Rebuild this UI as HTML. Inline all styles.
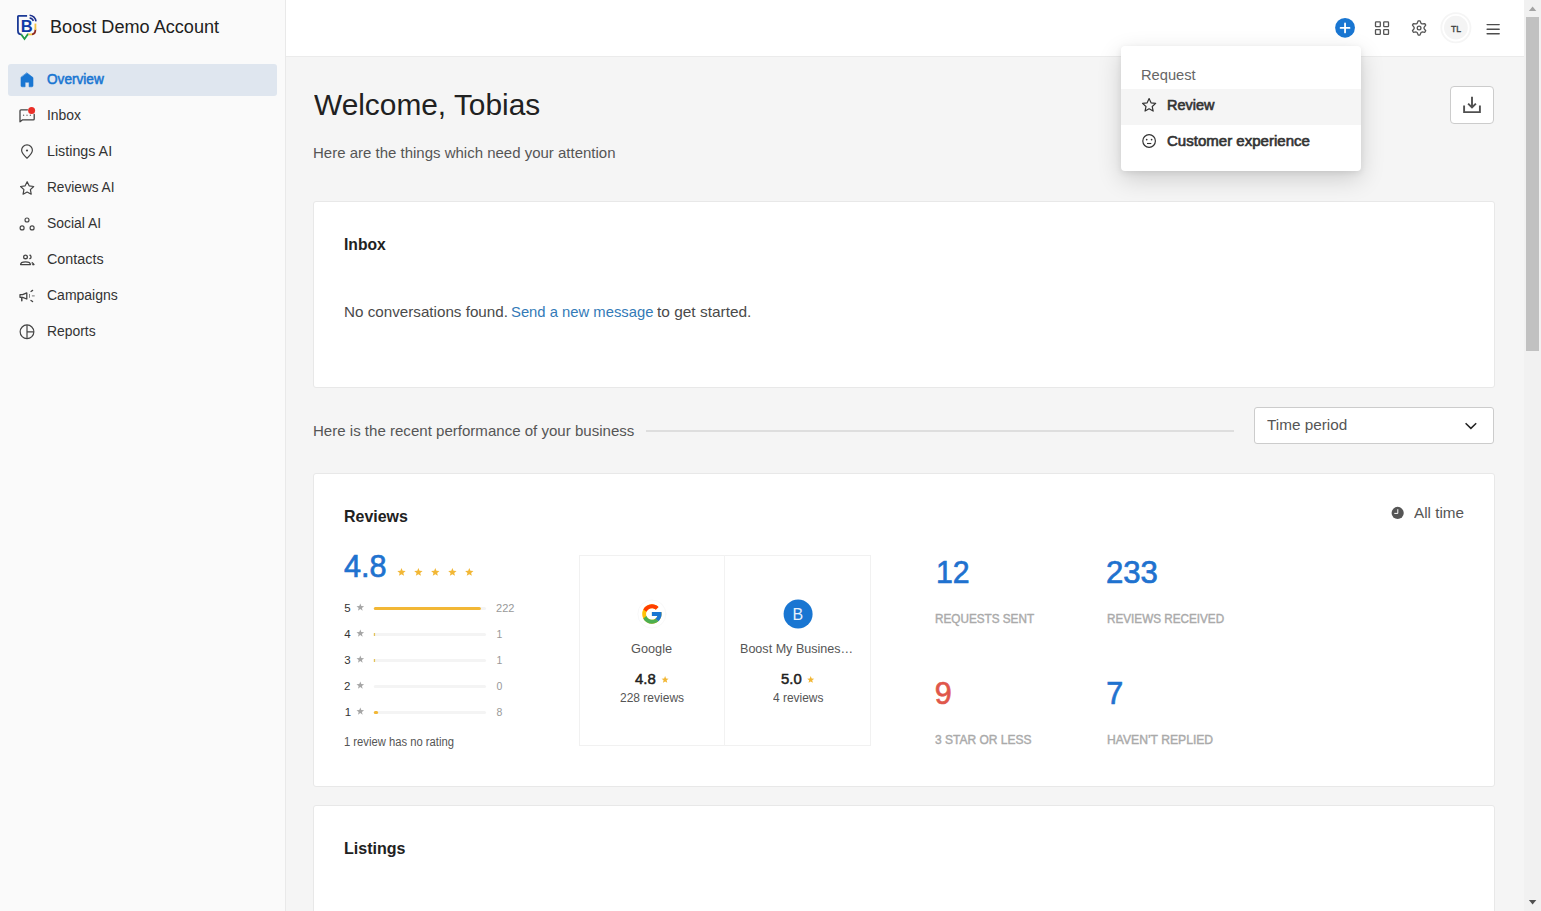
<!DOCTYPE html>
<html lang="en">
<head>
<meta charset="utf-8">
<title>Boost Demo Account - Overview</title>
<style>
*{box-sizing:border-box;margin:0;padding:0}
html,body{width:1541px;height:911px;overflow:hidden;background:#f5f5f5;font-family:"Liberation Sans",sans-serif;color:#212121}
ul,li{list-style:none}
.t{position:absolute;white-space:nowrap;line-height:1;font-weight:400;text-decoration:none;font-style:normal}
.box{position:absolute}
svg.ic{position:absolute;left:0;top:0;overflow:visible;pointer-events:none}
#sidebar-bg{position:absolute;left:0;top:0;width:286px;height:911px;background:#fafafa;border-right:1px solid #e9e9e9}
#topbar-bg{position:absolute;left:286px;top:0;width:1238px;height:57px;background:#fff;border-bottom:1px solid #ebebeb}
#scroll-track{position:absolute;left:1524px;top:0;width:17px;height:911px;background:#f1f1f1}
#scroll-thumb{position:absolute;left:1526px;top:17px;width:13px;height:334px;background:#c1c1c1}
.nav-active{position:absolute;left:8px;top:64px;width:269px;height:32px;border-radius:3px;background:#dfe6ef}
.card{position:absolute;left:313px;width:1182px;background:#fff;border:1px solid #e8e8e8;border-radius:3px}
.btn{position:absolute;background:#fff;border:1px solid #ccc;border-radius:4px}
.menu{position:absolute;left:1121px;top:46px;width:240px;height:125px;background:#fff;border-radius:4px;box-shadow:0 8px 24px rgba(0,0,0,.16),0 2px 6px rgba(0,0,0,.08)}
.menu-hover{position:absolute;left:1121px;top:89px;width:240px;height:36px;background:#f5f5f5}
</style>
</head>
<body>

<aside id="sidebar" aria-label="Main navigation">
<div id="sidebar-bg"></div>
<div class="nav-active"></div>
<svg class="ic" width="1541" height="911" viewBox="0 0 1541 911" fill="none" stroke-linecap="round" stroke-linejoin="round" aria-hidden="true">
<g stroke-width="1.8" stroke-linecap="butt">
<path d="M27.1 15.9H18.6Q17.9 15.9 17.9 16.6V30.4Q17.9 34.4 21.6 34.4" stroke="#1b3a96"/>
<path d="M21.3 34.4L24.5 38.9L27.7 34.4H28.6" stroke="#1e9a46" stroke-linejoin="miter"/>
<path d="M28.4 34.4H32.2" stroke="#f3c440"/>
<path d="M32 34.4Q35.4 34.2 35.4 29.6" stroke="#8e2a22"/>
<path d="M35.4 30V23.6" stroke="#f2c445"/>
<path d="M29.6 15.2A7.4 7.4 0 0 1 36 21.4" stroke="#1b2f8c" stroke-width="1.6"/>
<path d="M29.6 18A4.6 4.6 0 0 1 33.4 20.9" stroke="#1b2f8c" stroke-width="1.6"/>
</g>
<path d="M27 73L33 77.6V85.7Q33 86.8 31.9 86.8H29.1V82.6Q29.1 82.2 28.7 82.2H25.5Q25.1 82.2 25.1 82.6V86.8H22.1Q21 86.8 21 85.7V77.6Z" fill="#1976d2" stroke="#1976d2" stroke-width="0.6"/>
<path d="M27.4 109.8H21Q20 109.8 20 110.8V121.8L22.3 119.9H33.2Q34.2 119.9 34.2 118.9V114.3" stroke="#444" stroke-width="1.3"/>
<g fill="#666"><circle cx="23.6" cy="115.2" r="0.7"/><circle cx="27" cy="115.2" r="0.7"/><circle cx="30.4" cy="115.2" r="0.7"/></g>
<circle cx="31.6" cy="110.6" r="3.5" fill="#ea2f28"/>
<path d="M27 158.2C23.4 154.9 21.6 152.4 21.6 150.3A5.4 5.4 0 0 1 32.4 150.3C32.4 152.4 30.6 154.9 27 158.2Z" stroke="#444" stroke-width="1.2"/>
<circle cx="27" cy="150.5" r="1.1" fill="#444"/>
<path d="M27.15 181.70L29.15 185.85L33.71 186.47L30.38 189.65L31.21 194.18L27.15 192.00L23.09 194.18L23.92 189.65L20.59 186.47L25.15 185.85Z" stroke="#444" stroke-width="1.2" stroke-linejoin="round"/>
<g stroke="#444" stroke-width="1.15"><circle cx="27" cy="220" r="2"/><circle cx="22.1" cy="227.9" r="2"/><circle cx="32.1" cy="227.9" r="2"/></g>
<g stroke="#444" stroke-width="1.3">
<circle cx="25.5" cy="256.9" r="1.85"/>
<path d="M29.9 255.2A1.9 1.9 0 0 1 29.9 258.7"/>
<path d="M20.6 264.6C20.6 263.2 22.6 261.9 25.5 261.9C28.4 261.9 30.4 263.2 30.4 264.6Z"/>
<path d="M32.3 262.5C33.6 263.1 34.2 263.9 34.2 264.9H32.9Z" fill="#444" stroke-width="0.8"/>
</g>
<g stroke="#444" stroke-width="1.3">
<path d="M20 294.7H22.6L26.8 292.9V299L22.6 297.3H20Z"/>
<path d="M21.8 297.6V300.8" stroke-width="1.5"/>
<path d="M29.5 294.4V297.4" stroke-width="0.9" stroke="#777"/>
<path d="M32.3 295.9H34.3" stroke-width="1" stroke="#777"/>
<path d="M31 291.5L32.6 290.4"/>
<path d="M31 300.4L32.6 301.6"/>
</g>
<g stroke="#444" stroke-width="1.2"><circle cx="27" cy="331.8" r="6.85"/><path d="M27 325V338.6M27 331.9H33.8" stroke-linecap="butt"/></g>
</svg>
<span class="t" style="left:20.87px;top:18px;font-size:16.5px;color:#0f3aa8;font-weight:700;">B</span>
<span class="t" style="left:50.29px;top:18px;font-size:18px;color:#212121;transform:scaleX(1.0057);transform-origin:0 0;">Boost Demo Account</span>
<a class="t" style="left:47.06px;top:72px;font-size:14px;color:#1976d2;transform:scaleX(0.9730);transform-origin:0 0;-webkit-text-stroke:0.55px #1976d2;">Overview</a>
<a class="t" style="left:46.91px;top:108px;font-size:14px;color:#333;transform:scaleX(0.9953);transform-origin:0 0;">Inbox</a>
<a class="t" style="left:46.88px;top:144px;font-size:14px;color:#333;transform:scaleX(1.0204);transform-origin:0 0;">Listings AI</a>
<a class="t" style="left:46.88px;top:180px;font-size:14px;color:#333;transform:scaleX(0.9747);transform-origin:0 0;">Reviews AI</a>
<a class="t" style="left:46.97px;top:216px;font-size:14px;color:#333;transform:scaleX(0.9935);transform-origin:0 0;">Social AI</a>
<a class="t" style="left:46.83px;top:252px;font-size:14px;color:#333;transform:scaleX(1.0248);transform-origin:0 0;">Contacts</a>
<a class="t" style="left:46.84px;top:288px;font-size:14px;color:#333;transform:scaleX(0.9997);transform-origin:0 0;">Campaigns</a>
<a class="t" style="left:46.86px;top:324px;font-size:14px;color:#333;transform:scaleX(0.9929);transform-origin:0 0;">Reports</a>
</aside>
<header id="topbar">
<div id="topbar-bg"></div>
<svg class="ic" width="1541" height="911" viewBox="0 0 1541 911" fill="none" stroke-linecap="round" stroke-linejoin="round" aria-hidden="true">
<circle cx="1345.05" cy="27.85" r="9.9" fill="#1976d2"/>
<path d="M1340.6 27.9H1349.5M1345.05 23.4V32.4" stroke="#fff" stroke-width="1.8"/>
<g stroke="#555" stroke-width="1.3"><rect x="1375.5" y="21.8" width="4.8" height="4.8" rx="0.6"/><rect x="1375.5" y="29.6" width="4.8" height="4.8" rx="0.6"/><rect x="1383.7" y="21.8" width="4.8" height="4.8" rx="0.6"/><rect x="1383.7" y="29.6" width="4.8" height="4.8" rx="0.6"/></g>
<path d="M1417.15 23.35L1418.22 20.80L1419.98 20.80L1421.05 23.35L1422.11 23.96L1424.85 23.62L1425.73 25.14L1424.06 27.34L1424.06 28.56L1425.73 30.76L1424.85 32.28L1422.11 31.94L1421.05 32.55L1419.98 35.10L1418.22 35.10L1417.15 32.55L1416.09 31.94L1413.35 32.28L1412.47 30.76L1414.14 28.56L1414.14 27.34L1412.47 25.14L1413.35 23.62L1416.09 23.96Z" stroke="#555" stroke-width="1.3"/>
<circle cx="1419.1" cy="27.95" r="1.85" stroke="#555" stroke-width="1.3"/>
<circle cx="1455.9" cy="27.7" r="14.6" stroke="#f5f5f5" stroke-width="1.8"/>
<circle cx="1455.9" cy="27.7" r="11.9" fill="#f4f4f4"/>
<path d="M1487.1 24.6H1499.2M1487.1 29.2H1499.2M1487.1 33.7H1499.2" stroke="#4d4d4d" stroke-width="1.4"/>
</svg>
<span class="t" style="left:1451.12px;top:24px;font-size:9.5px;color:#444;transform:scaleX(0.9148);transform-origin:0 0;-webkit-text-stroke:0.4px #444;">TL</span>
</header>
<main id="content">
<section id="welcome">
<button class="btn" type="button" aria-label="Download" style="left:1450px;top:86px;width:44px;height:38px"></button>
<svg class="ic" width="1541" height="911" viewBox="0 0 1541 911" fill="none" stroke-linecap="round" stroke-linejoin="round" aria-hidden="true">
<path d="M1464.1 105.6V112.1H1479.9V105.6M1472 96.7V107.3M1468.1 103.6L1472 107.5L1475.9 103.6" stroke="#505050" stroke-width="1.9" stroke-linecap="butt" stroke-linejoin="miter"/>
</svg>
<h1 class="t" style="left:314.3px;top:90px;font-size:30px;color:#212121;transform:scaleX(0.9950);transform-origin:0 0;">Welcome, Tobias</h1>
<p class="t" style="left:313.43px;top:145px;font-size:15px;color:#555;transform:scaleX(0.9994);transform-origin:0 0;">Here are the things which need your attention</p>
</section>
<section id="inbox-card">
<div class="card" style="top:201px;height:187px"></div>
<h2 class="t" style="left:344.02px;top:236px;font-size:16.5px;color:#212121;transform:scaleX(0.9496);transform-origin:0 0;font-weight:700;">Inbox</h2>
<span class="t" style="left:343.61px;top:304px;font-size:15px;color:#4a4a4a;transform:scaleX(1.0136);transform-origin:0 0;">No conversations found.</span>
<a class="t" style="left:510.74px;top:304px;font-size:15px;color:#337ab7;transform:scaleX(0.9876);transform-origin:0 0;">Send a new message</a>
<span class="t" style="left:656.5px;top:304px;font-size:15px;color:#4a4a4a;transform:scaleX(1.0291);transform-origin:0 0;">to get started.</span>
</section>
<section id="performance">
<div class="box" style="left:646px;top:430px;width:588px;height:2px;background:#dedede"></div>
<div class="btn" role="combobox" style="left:1254px;top:407px;width:240px;height:37px;border-radius:3px"></div>
<svg class="ic" width="1541" height="911" viewBox="0 0 1541 911" fill="none" stroke-linecap="round" stroke-linejoin="round" aria-hidden="true">
<path d="M1465.6 423.2L1470.9 428.4L1476.2 423.2" stroke="#222" stroke-width="1.5" stroke-linecap="butt" stroke-linejoin="miter"/>
</svg>
<p class="t" style="left:313.22px;top:423px;font-size:15px;color:#555;transform:scaleX(1.0037);transform-origin:0 0;">Here is the recent performance of your business</p>
<span class="t" style="left:1266.86px;top:417px;font-size:15px;color:#555;transform:scaleX(1.0198);transform-origin:0 0;">Time period</span>
</section>
<section id="reviews-card">
<div class="card" style="top:473px;height:314px"></div>
<div class="box" style="left:579px;top:555px;width:292px;height:191px;border:1px solid #f1f1f1"></div>
<div class="box" style="left:724px;top:555px;width:1px;height:191px;background:#f2f2f2"></div>
<svg class="ic" width="1541" height="911" viewBox="0 0 1541 911" fill="none" stroke-linecap="round" stroke-linejoin="round" aria-hidden="true">
<circle cx="1397.65" cy="512.95" r="6.1" fill="#555"/>
<path d="M1397.8 509.2V513.4H1394.3" stroke="#fff" stroke-width="1" stroke-linecap="butt" stroke-linejoin="miter"/>
<path d="M401.50 567.90L402.62 570.76L405.68 570.94L403.31 572.89L404.09 575.86L401.50 574.20L398.91 575.86L399.69 572.89L397.32 570.94L400.38 570.76Z" fill="#f2b735"/>
<path d="M418.40 567.90L419.52 570.76L422.58 570.94L420.21 572.89L420.99 575.86L418.40 574.20L415.81 575.86L416.59 572.89L414.22 570.94L417.28 570.76Z" fill="#f2b735"/>
<path d="M435.30 567.90L436.42 570.76L439.48 570.94L437.11 572.89L437.89 575.86L435.30 574.20L432.71 575.86L433.49 572.89L431.12 570.94L434.18 570.76Z" fill="#f2b735"/>
<path d="M452.40 567.90L453.52 570.76L456.58 570.94L454.21 572.89L454.99 575.86L452.40 574.20L449.81 575.86L450.59 572.89L448.22 570.94L451.28 570.76Z" fill="#f2b735"/>
<path d="M469.30 567.90L470.42 570.76L473.48 570.94L471.11 572.89L471.89 575.86L469.30 574.20L466.71 575.86L467.49 572.89L465.12 570.94L468.18 570.76Z" fill="#f2b735"/>
<path d="M360.30 603.40L361.30 606.02L364.10 606.16L361.92 607.93L362.65 610.64L360.30 609.10L357.95 610.64L358.68 607.93L356.50 606.16L359.30 606.02Z" fill="#a6a6a6"/>
<rect x="373.8" y="607" width="112.2" height="3" rx="1.5" fill="#f4f4f4"/>
<path d="M360.30 629.40L361.30 632.02L364.10 632.16L361.92 633.93L362.65 636.64L360.30 635.10L357.95 636.64L358.68 633.93L356.50 632.16L359.30 632.02Z" fill="#a6a6a6"/>
<rect x="373.8" y="633" width="112.2" height="3" rx="1.5" fill="#f4f4f4"/>
<path d="M360.30 655.40L361.30 658.02L364.10 658.16L361.92 659.93L362.65 662.64L360.30 661.10L357.95 662.64L358.68 659.93L356.50 658.16L359.30 658.02Z" fill="#a6a6a6"/>
<rect x="373.8" y="659" width="112.2" height="3" rx="1.5" fill="#f4f4f4"/>
<path d="M360.30 681.40L361.30 684.02L364.10 684.16L361.92 685.93L362.65 688.64L360.30 687.10L357.95 688.64L358.68 685.93L356.50 684.16L359.30 684.02Z" fill="#a6a6a6"/>
<rect x="373.8" y="685" width="112.2" height="3" rx="1.5" fill="#f4f4f4"/>
<path d="M360.30 707.40L361.30 710.02L364.10 710.16L361.92 711.93L362.65 714.64L360.30 713.10L357.95 714.64L358.68 711.93L356.50 710.16L359.30 710.02Z" fill="#a6a6a6"/>
<rect x="373.8" y="711" width="112.2" height="3" rx="1.5" fill="#f4f4f4"/>
<rect x="373.8" y="607" width="107.1" height="3" rx="1.5" fill="#f2b735"/>
<rect x="373.8" y="633" width="1.3" height="3" fill="#e3c35a"/>
<rect x="373.8" y="659" width="1.3" height="3" fill="#e3c35a"/>
<rect x="373.8" y="711" width="4.3" height="3" rx="1.5" fill="#f2b735"/>
<path d="M665.10 676.10L666.04 678.51L668.62 678.66L666.62 680.29L667.27 682.79L665.10 681.40L662.93 682.79L663.58 680.29L661.58 678.66L664.16 678.51Z" fill="#f2b735"/>
<path d="M810.70 676.10L811.64 678.51L814.22 678.66L812.22 680.29L812.87 682.79L810.70 681.40L808.53 682.79L809.18 680.29L807.18 678.66L809.76 678.51Z" fill="#f2b735"/>
<circle cx="798.1" cy="613.9" r="14.5" fill="#1976d2"/>
<g transform="translate(640.26 602.36) scale(0.485)">
<circle cx="24" cy="24" r="29" fill="#fff" stroke="#f8f8f8" stroke-width="2"/>
<path fill="#FFC107" d="M43.611 20.083H42V20H24v8h11.303c-1.649 4.657-6.08 8-11.303 8-6.627 0-12-5.373-12-12s5.373-12 12-12c3.059 0 5.842 1.154 7.961 3.039l5.657-5.657C34.046 6.053 29.268 4 24 4 12.955 4 4 12.955 4 24s8.955 20 20 20 20-8.955 20-20c0-1.341-.138-2.65-.389-3.917z"/>
<path fill="#FF3D00" d="M6.306 14.691l6.571 4.819C14.655 15.108 18.961 12 24 12c3.059 0 5.842 1.154 7.961 3.039l5.657-5.657C34.046 6.053 29.268 4 24 4 16.318 4 9.656 8.337 6.306 14.691z"/>
<path fill="#4CAF50" d="M24 44c5.166 0 9.860-1.977 13.409-5.192l-6.190-5.238A11.910 11.910 0 0 1 24 36c-5.202 0-9.619-3.317-11.283-7.946l-6.522 5.025C9.505 39.556 16.227 44 24 44z"/>
<path fill="#1976D2" d="M43.611 20.083H42V20H24v8h11.303a12.040 12.040 0 0 1-4.087 5.571l.003-.002 6.190 5.238C36.971 39.205 44 34 44 24c0-1.341-.138-2.650-.389-3.917z"/>
</g>
</svg>
<h2 class="t" style="left:344px;top:508px;font-size:16.5px;color:#212121;transform:scaleX(0.9667);transform-origin:0 0;font-weight:700;">Reviews</h2>
<span class="t" style="left:1414.3px;top:505px;font-size:15px;color:#555;transform:scaleX(1.0172);transform-origin:0 0;">All time</span>
<span class="t" style="left:344.32px;top:551px;font-size:30.5px;color:#1f72cf;transform:scaleX(1.0028);transform-origin:0 0;-webkit-text-stroke:0.7px #1f72cf;">4.8</span>
<span class="t" style="left:344.15px;top:603px;font-size:11.5px;color:#333;">5</span>
<span class="t" style="left:496.47px;top:603px;font-size:10.5px;color:#999;transform:scaleX(1.0527);transform-origin:0 0;">222</span>
<span class="t" style="left:344.35px;top:629px;font-size:11.5px;color:#333;">4</span>
<span class="t" style="left:496.6px;top:629px;font-size:10.5px;color:#999;">1</span>
<span class="t" style="left:344.2px;top:655px;font-size:11.5px;color:#333;">3</span>
<span class="t" style="left:496.6px;top:655px;font-size:10.5px;color:#999;">1</span>
<span class="t" style="left:344.05px;top:681px;font-size:11.5px;color:#333;">2</span>
<span class="t" style="left:496.6px;top:681px;font-size:10.5px;color:#999;">0</span>
<span class="t" style="left:344.75px;top:707px;font-size:11.5px;color:#333;">1</span>
<span class="t" style="left:496.55px;top:707px;font-size:10.5px;color:#999;">8</span>
<span class="t" style="left:344.06px;top:736px;font-size:12px;color:#555;transform:scaleX(0.9363);transform-origin:0 0;">1 review has no rating</span>
<span class="t" style="left:631.49px;top:643px;font-size:12.5px;color:#555;transform:scaleX(1.0190);transform-origin:0 0;">Google</span>
<span class="t" style="left:635.17px;top:671px;font-size:15px;color:#212121;transform:scaleX(0.9945);transform-origin:0 0;-webkit-text-stroke:0.5px #212121;">4.8</span>
<span class="t" style="left:620.21px;top:692px;font-size:12.3px;color:#555;transform:scaleX(0.9763);transform-origin:0 0;">228 reviews</span>
<span class="t" style="left:792.45px;top:607px;font-size:16px;color:#e8f1fb;">B</span>
<span class="t" style="left:739.89px;top:643px;font-size:12.5px;color:#555;transform:scaleX(1.0055);transform-origin:0 0;">Boost My Busines…</span>
<span class="t" style="left:780.54px;top:671px;font-size:15px;color:#212121;transform:scaleX(0.9895);transform-origin:0 0;-webkit-text-stroke:0.5px #212121;">5.0</span>
<span class="t" style="left:772.66px;top:692px;font-size:12.3px;color:#555;transform:scaleX(0.9707);transform-origin:0 0;">4 reviews</span>
<span class="t" style="left:935.81px;top:557px;font-size:30.5px;color:#1f72cf;transform:scaleX(0.9908);transform-origin:0 0;-webkit-text-stroke:0.7px #1f72cf;">12</span>
<span class="t" style="left:935.07px;top:613px;font-size:12px;color:#aaa;transform:scaleX(0.9773);transform-origin:0 0;-webkit-text-stroke:0.4px #aaa;">REQUESTS SENT</span>
<span class="t" style="left:1106.04px;top:557px;font-size:30.5px;color:#1f72cf;transform:scaleX(1.0203);transform-origin:0 0;-webkit-text-stroke:0.7px #1f72cf;">233</span>
<span class="t" style="left:1106.57px;top:613px;font-size:12px;color:#aaa;transform:scaleX(0.9755);transform-origin:0 0;-webkit-text-stroke:0.4px #aaa;">REVIEWS RECEIVED</span>
<span class="t" style="left:934.87px;top:678px;font-size:30.5px;color:#e0574a;-webkit-text-stroke:0.7px #e0574a;">9</span>
<span class="t" style="left:935.45px;top:734px;font-size:12px;color:#aaa;transform:scaleX(1.0008);transform-origin:0 0;-webkit-text-stroke:0.4px #aaa;">3 STAR OR LESS</span>
<span class="t" style="left:1106.27px;top:678px;font-size:30.5px;color:#1f72cf;-webkit-text-stroke:0.7px #1f72cf;">7</span>
<span class="t" style="left:1106.54px;top:734px;font-size:12px;color:#aaa;transform:scaleX(1.0114);transform-origin:0 0;-webkit-text-stroke:0.4px #aaa;">HAVEN’T REPLIED</span>
</section>
<section id="listings-card">
<div class="card" style="top:805px;height:120px"></div>
<h2 class="t" style="left:344px;top:840px;font-size:16.5px;color:#212121;transform:scaleX(0.9731);transform-origin:0 0;font-weight:700;">Listings</h2>
</section>
</main>
<div id="scrollbar" aria-hidden="true">
<div id="scroll-track"></div>
<div id="scroll-thumb"></div>
<svg class="ic" width="1541" height="911" viewBox="0 0 1541 911" fill="none" stroke-linecap="round" stroke-linejoin="round" aria-hidden="true">
<path d="M1532.6 6.6L1536.3 10.9H1528.9Z" fill="#a3a3a3"/>
<path d="M1532.6 904.4L1536.3 900.1H1528.9Z" fill="#505050"/>
</svg>
</div>
<div id="request-menu" role="menu">
<div class="menu"></div>
<div class="menu-hover"></div>
<svg class="ic" width="1541" height="911" viewBox="0 0 1541 911" fill="none" stroke-linecap="round" stroke-linejoin="round" aria-hidden="true">
<path d="M1149.10 98.60L1151.04 102.83L1155.66 103.37L1152.24 106.52L1153.16 111.08L1149.10 108.80L1145.04 111.08L1145.96 106.52L1142.54 103.37L1147.16 102.83Z" stroke="#333" stroke-width="1.2" stroke-linejoin="round"/>
<circle cx="1149.1" cy="141" r="6.3" stroke="#333" stroke-width="1.2"/>
<circle cx="1146.7" cy="139.6" r="0.85" fill="#333"/><circle cx="1151.6" cy="139.6" r="0.85" fill="#333"/>
<path d="M1147 143.5H1151.3" stroke="#333" stroke-width="1.1" stroke-linecap="butt"/>
</svg>
<span class="t" style="left:1140.55px;top:68px;font-size:14px;color:#666;transform:scaleX(1.0490);transform-origin:0 0;">Request</span>
<a class="t" style="left:1166.77px;top:98px;font-size:14px;color:#333;transform:scaleX(1.0316);transform-origin:0 0;-webkit-text-stroke:0.6px #333;">Review</a>
<a class="t" style="left:1167.2px;top:134px;font-size:14px;color:#333;transform:scaleX(1.0740);transform-origin:0 0;-webkit-text-stroke:0.6px #333;">Customer experience</a>
</div>
</body>
</html>
